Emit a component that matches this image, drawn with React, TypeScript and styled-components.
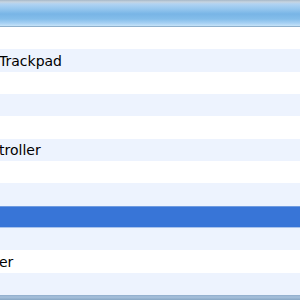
import React from 'react';
import styled, { createGlobalStyle } from 'styled-components';

const GlobalStyle = createGlobalStyle`
  html, body {
    margin: 0;
    padding: 0;
    width: 300px;
    height: 300px;
    overflow: hidden;
    background: #ffffff;
  }
`;

const Window = styled.div`
  width: 300px;
  height: 300px;
  display: flex;
  flex-direction: column;
  overflow: hidden;
  font-family: 'DejaVu Sans', 'Liberation Sans', sans-serif;
  font-size: 14px;
  color: #000;
`;

const HeaderBar = styled.div`
  height: 27px;
  flex: none;
  box-sizing: border-box;
  border-bottom: 1px solid #8fb0cc;
  background: linear-gradient(
    to bottom,
    #a6b7c7 0px,
    #c6d4e0 2px,
    #b0d3f2 4px,
    #95c6ee 9px,
    #78b5e6 14px,
    #84bdea 19px,
    #a5d0f3 23px,
    #c6e3f8 26px
  );
`;

const List = styled.div`
  flex: 1;
  display: flex;
  flex-direction: column;
`;

const Row = styled.div<{ $striped: boolean; $selected?: boolean }>`
  height: 22.33px;
  flex: none;
  box-sizing: border-box;
  display: flex;
  align-items: center;
  white-space: nowrap;
  overflow: hidden;
  background: ${(p) => (p.$selected ? '#3875d7' : p.$striped ? '#edf3fe' : '#ffffff')};
  ${(p) =>
    p.$selected &&
    `
    border-top: 1px solid #6f9be0;
    border-bottom: 1px solid #a9c3ec;
    color: #fff;
  `}
`;

const Label = styled.span<{ $indent: number }>`
  margin-left: ${(p) => p.$indent}px;
  padding-top: 1px;
  line-height: 1;
`;

const FooterBar = styled.div`
  height: 5px;
  flex: none;
  background: linear-gradient(to bottom, #8faccb 0px, #a7c1dc 2px, #88a6c4 5px);
`;

const rows: { text?: string; indent?: number; selected?: boolean }[] = [
  {},
  { text: 'Trackpad', indent: -1 },
  {},
  {},
  {},
  { text: 'troller', indent: -1 },
  {},
  {},
  { selected: true },
  {},
  { text: 'er', indent: -1 },
  {},
];

const App: React.FC = () => {
  return (
    <Window>
      <GlobalStyle />
      <HeaderBar />
      <List>
        {rows.map((r, i) => (
          <Row key={i} $striped={i % 2 === 1} $selected={r.selected}>
            {r.text && <Label $indent={r.indent ?? 0}>{r.text}</Label>}
          </Row>
        ))}
      </List>
      <FooterBar />
    </Window>
  );
};

export default App;
